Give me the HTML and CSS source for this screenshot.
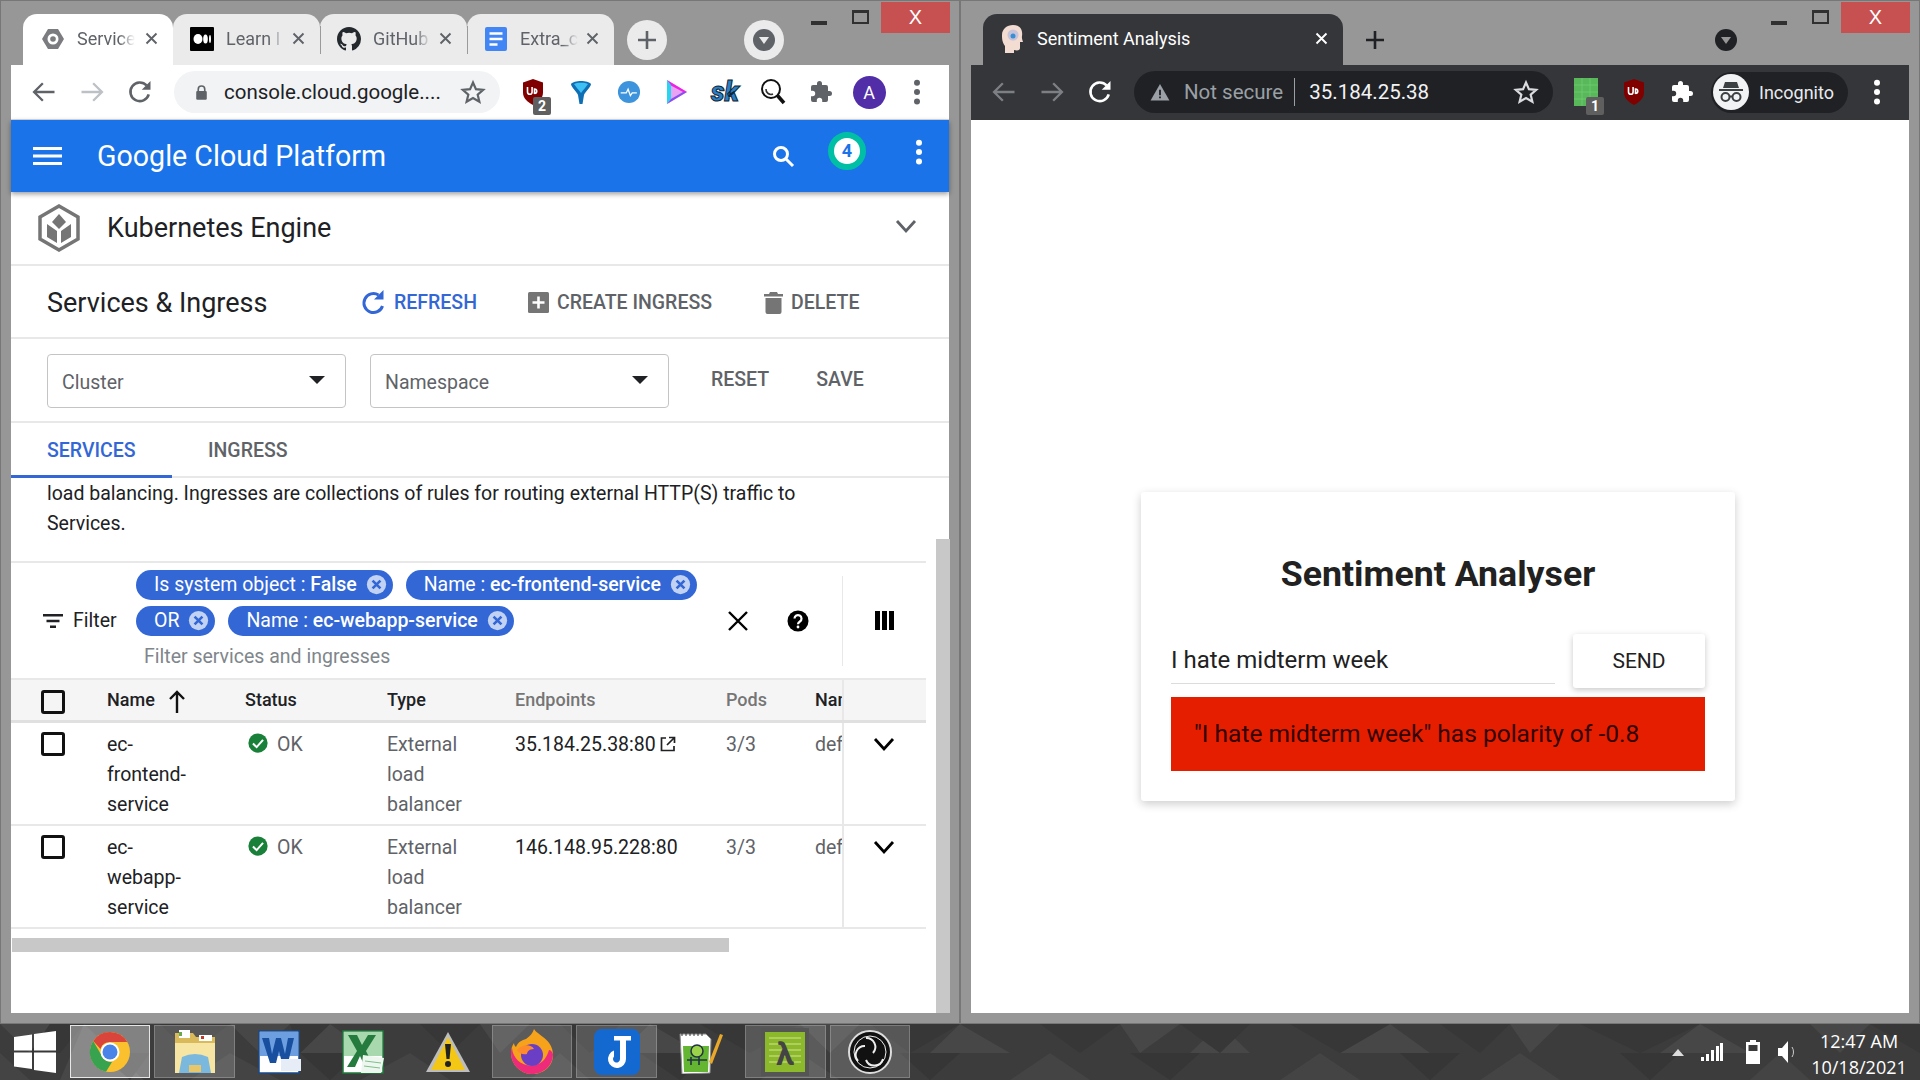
FILE: index.html
```html
<!DOCTYPE html>
<html lang="en">
<head>
  <meta charset="UTF-8" />
  <title>Services &amp; Ingress</title>
  <link rel="stylesheet" href="styles.css">
</head>
<body>

  <!-- shared icons -->
  <svg class="defs" width="0" height="0">
    <symbol id="i-x" viewBox="0 0 24 24"><path d="M4 4l16 16M20 4L4 20" fill="none" stroke="currentColor" stroke-width="3"/></symbol>
    <symbol id="i-back" viewBox="0 0 24 24"><path d="M21 12H4M11 4.500L3.500 12l7.500 7.500" fill="none" stroke="currentColor" stroke-width="2"/></symbol>
    <symbol id="i-fwd" viewBox="0 0 24 24"><path d="M3 12h17M13 4.500l7.500 7.500-7.500 7.500" fill="none" stroke="currentColor" stroke-width="2"/></symbol>
    <symbol id="i-reload" viewBox="0 0 24 24"><path d="M19.500 14a8 8 0 1 1-1.800-7.600" fill="none" stroke="currentColor" stroke-width="2.200"/><path d="M21 2.500v7.500h-7.500z" fill="currentColor"/></symbol>
    <symbol id="i-star" viewBox="0 0 24 24"><path d="M12 3.200l2.700 6.200 6.700.6-5.100 4.400 1.600 6.600L12 17.500l-5.900 3.500 1.600-6.600-5.100-4.400 6.700-.6z" fill="none" stroke="currentColor" stroke-width="2"/></symbol>
    <symbol id="i-puzzle" viewBox="0 0 24 24"><path d="M20.500 11H19V7a2 2 0 0 0-2-2h-4V3.500a2.500 2.500 0 0 0-5 0V5H4a2 2 0 0 0-2 2v3.800h1.500a2.700 2.700 0 0 1 0 5.400H2V20a2 2 0 0 0 2 2h3.800v-1.500a2.700 2.700 0 0 1 5.400 0V22H17a2 2 0 0 0 2-2v-4h1.500a2.500 2.500 0 0 0 0-5z" fill="currentColor"/></symbol>
    <symbol id="i-dots" viewBox="0 0 8 32"><circle cx="4" cy="6" r="3.200" fill="currentColor"/><circle cx="4" cy="16" r="3.200" fill="currentColor"/><circle cx="4" cy="26" r="3.200" fill="currentColor"/></symbol>
    <symbol id="i-shield" viewBox="0 0 24 28"><path d="M12 1l10 3.500v10c0 6-5 10-10 12.500C7 24.500 2 20.500 2 14.500v-10z" fill="#800000"/><path d="M6.500 9v5a2.300 2.300 0 0 0 4.600 0V9M13.500 16v-5a2.200 2.200 0 1 1 0 4.500" fill="none" stroke="#fff" stroke-width="1.600"/></symbol>
    <symbol id="i-check" viewBox="0 0 24 24"><circle cx="12" cy="12" r="10.500" fill="#188038"/><path d="M6.500 12.500l4 4 7-8" fill="none" stroke="#fff" stroke-width="2.200"/></symbol>
    <symbol id="i-chip-x" viewBox="0 0 24 24"><circle cx="12" cy="12" r="11" fill="#c2d2f3"/><path d="M7.500 7.500l9 9M16.500 7.500l-9 9" fill="none" stroke="#3367d6" stroke-width="3"/></symbol>
    <symbol id="i-chevron" viewBox="0 0 24 16"><path d="M3 3l9 10 9-10" fill="none" stroke="currentColor" stroke-width="2.800"/></symbol>
  </svg>

  <div class="desktop">

    <!-- Left window: Cloud console -->
    <div class="window">
      <div class="tabstrip">
        <div class="tab tab-active">
          <svg class="favicon" viewBox="0 0 24 24"><path d="M7 2h10l6 10-6 10H7L1 12z" fill="#7b7c7f"/><circle cx="12" cy="12" r="5.500" fill="#fff"/><circle cx="12" cy="12" r="2.800" fill="#7b7c7f"/></svg>
          <span class="tab-title">Service</span>
          <svg class="tab-x"><use href="#i-x"/></svg>
        </div>
        <div class="tab">
          <svg class="favicon" viewBox="0 0 24 24"><rect width="24" height="24" rx="1" fill="#000"/><ellipse cx="8" cy="12" rx="4.500" ry="5" fill="#fff"/><ellipse cx="15.500" cy="12" rx="2.300" ry="4.600" fill="#fff"/><ellipse cx="20" cy="12" rx="1" ry="4" fill="#fff"/></svg>
          <span class="tab-title">Learn I</span>
          <svg class="tab-x"><use href="#i-x"/></svg>
        </div>
        <div class="tab tab-sep">
          <svg class="favicon" viewBox="0 0 16 16"><path fill="#24292e" d="M8 0C3.580 0 0 3.580 0 8c0 3.540 2.290 6.530 5.470 7.590.4.070.55-.17.55-.38 0-.19-.01-.82-.01-1.490-2.010.37-2.530-.49-2.690-.94-.09-.23-.48-.94-.82-1.130-.28-.15-.68-.52-.01-.53.630-.01 1.080.58 1.230.82.720 1.210 1.870.87 2.330.66.070-.52.280-.87.510-1.070-1.780-.2-3.640-.89-3.640-3.950 0-.87.310-1.590.820-2.150-.08-.2-.36-1.020.08-2.120 0 0 .67-.21 2.200.82a7.420 7.420 0 0 1 4 0c1.530-1.040 2.200-.82 2.200-.82.440 1.100.16 1.920.08 2.120.51.560.82 1.270.82 2.150 0 3.070-1.870 3.750-3.650 3.950.29.250.54.730.54 1.480 0 1.070-.01 1.930-.01 2.200 0 .21.150.46.550.38A8.010 8.010 0 0 0 16 8c0-4.420-3.580-8-8-8z"/></svg>
          <span class="tab-title">GitHub</span>
          <svg class="tab-x"><use href="#i-x"/></svg>
        </div>
        <div class="tab tab-sep">
          <svg class="favicon" viewBox="0 0 24 24"><rect x="1" width="22" height="24" rx="2" fill="#4285f4"/><path d="M5.500 6.500h13M5.500 12h13M5.500 17.500h8" stroke="#fff" stroke-width="2.400"/></svg>
          <span class="tab-title">Extra_c</span>
          <svg class="tab-x"><use href="#i-x"/></svg>
        </div>
        <div class="round-btn new-tab"><svg viewBox="0 0 24 24" width="24" height="24"><path d="M12 3v18M3 12h18" stroke="#5f6368" stroke-width="2.600"/></svg></div>
        <div class="round-btn tab-search"><span class="search-dot"></span></div>
        <div class="win-ctrls">
          <span class="win-min"></span>
          <span class="win-max"></span>
          <span class="win-close">X</span>
        </div>
      </div>

      <div class="toolbar">
        <span class="tool"><svg class="ico-28"><use href="#i-back"/></svg></span>
        <span class="tool tool-dim"><svg class="ico-28"><use href="#i-fwd"/></svg></span>
        <span class="tool"><svg class="ico-28"><use href="#i-reload"/></svg></span>
        <div class="omnibox">
          <svg class="lock" viewBox="0 0 16 20"><path d="M4 9V6a4 4 0 0 1 8 0v3" fill="none" stroke="#5f6368" stroke-width="2"/><rect x="1.500" y="8" width="13" height="11" rx="1.500" fill="#5f6368"/></svg>
          <span class="url">console.cloud.google....</span>
          <svg class="ico-26 star"><use href="#i-star"/></svg>
        </div>
        <span class="tool ext"><svg width="24" height="28"><use href="#i-shield"/></svg><b class="ext-badge">2</b></span>
        <span class="tool"><svg width="22" height="24" viewBox="0 0 22 24"><path d="M1 4c3-4 17-4 20 0 0 3-6 8-7 11l-1.500 9h-3L8 15C7 12 1 7 1 4z" fill="#0f6fb4"/><path d="M4 4c3-1.800 11-1.800 14 0-2 3-4 5-7 9-3-4-5-6-7-9z" fill="#3fc0f5"/></svg></span>
        <span class="tool"><svg width="24" height="24" viewBox="0 0 26 26"><circle cx="13" cy="13" r="12" fill="#3e94dc"/><path d="M4 14h6l2-4 2.500 7 2-3h5" fill="none" stroke="#fff" stroke-width="1.400"/></svg></span>
        <span class="tool"><svg width="24" height="28" viewBox="0 0 24 28"><path d="M2 2l20 12L2 26z" fill="#e6a4f2"/><path d="M2 2l20 12-4 0L5 7z" fill="#ee22e6"/><path d="M2 2v24l4-5V7z" fill="#27d6ee"/><path d="M2 26l20-12-4 0L6 21z" fill="#8a4df0"/></svg></span>
        <span class="tool"><span class="sk-logo">sk</span></span>
        <span class="tool"><svg width="26" height="28" viewBox="0 0 26 28"><circle cx="11" cy="11" r="9" fill="#fff" stroke="#111" stroke-width="2"/><path d="M6 11a5 5 0 0 0 7 5" fill="none" stroke="#333" stroke-width="1.600"/><path d="M17 17l7 8" stroke="#111" stroke-width="3.600"/></svg></span>
        <span class="tool"><svg class="ico-22"><use href="#i-puzzle"/></svg></span>
        <span class="tool"><span class="avatar">A</span></span>
        <span class="tool"><svg class="dots"><use href="#i-dots"/></svg></span>
      </div>

      <div class="content">
        <header class="gcp-bar">
          <svg class="hamburger" viewBox="0 0 29 18"><path d="M0 1.500h29M0 9h29M0 16.500h29" stroke="#fff" stroke-width="3"/></svg>
          <span class="gcp-title">Google Cloud Platform</span>
          <svg class="gcp-search" viewBox="0 0 24 24"><circle cx="10" cy="10" r="6.500" fill="none" stroke="#fff" stroke-width="3"/><path d="M15 15l7 7" stroke="#fff" stroke-width="3"/></svg>
          <span class="gcp-badge">4</span>
          <svg class="gcp-dots"><use href="#i-dots"/></svg>
        </header>

        <div class="product-row">
          <svg class="k8s" viewBox="0 0 44 48"><path d="M22 2l19 11v22L22 46 3 35V13z" fill="none" stroke="#757575" stroke-width="3.500"/><path d="M22 10l7 8-7 7-7-7z" fill="#757575"/><path d="M10 20l10 7v12l-10-6zM34 20l-10 7v12l10-6z" fill="#757575"/></svg>
          <span class="product-name">Kubernetes Engine</span>
          <svg class="product-chevron"><use href="#i-chevron"/></svg>
        </div>

        <div class="title-row">
          <h2>Services &amp; Ingress</h2>
          <span class="action action-blue action-refresh"><svg width="25" height="27" viewBox="0 0 25 27"><path d="M21.500 17a9.500 9.500 0 1 1-4-11" fill="none" stroke="#3367d6" stroke-width="3"/><path d="M22.500 1v9.500H13z" fill="#3367d6"/></svg>REFRESH</span>
          <span class="action action-create"><svg width="21" height="21" viewBox="0 0 21 21"><rect width="21" height="21" rx="1.500" fill="#757575"/><path d="M10.500 4.500v12M4.500 10.500h12" stroke="#fff" stroke-width="2.600"/></svg>CREATE INGRESS</span>
          <span class="action action-delete"><svg width="19" height="22" viewBox="0 0 19 22"><path d="M6 0h7l1 2h5v2.500H0V2h5zM1.500 6h16v14a2 2 0 0 1-2 2h-12a2 2 0 0 1-2-2z" fill="#757575"/></svg>DELETE</span>
        </div>

        <div class="select-row">
          <div class="select select-first"><span>Cluster</span><i class="caret"></i></div>
          <div class="select"><span>Namespace</span><i class="caret"></i></div>
          <span class="plain-btn plain-reset">RESET</span>
          <span class="plain-btn plain-save">SAVE</span>
        </div>

        <div class="tabs">
          <span class="tab-link tab-link-on">SERVICES</span>
          <span class="tab-link">INGRESS</span>
        </div>

        <div class="scroller">
          <div class="scroll-body">
            <p class="intro">load balancing. Ingresses are collections of rules for routing external HTTP(S) traffic to Services.</p>

            <div class="filter-box">
              <div class="filter-label">
                <svg width="20" height="14" viewBox="0 0 20 14"><path d="M0 1.200h20M3.500 7h13M7 12.800h6" stroke="#202124" stroke-width="2.400"/></svg>
                <span>Filter</span>
              </div>
              <div class="filter-main">
                <div class="chips">
                  <span class="chip">Is system object : <b>False</b><svg><use href="#i-chip-x"/></svg></span>
                  <span class="chip">Name : <b>ec-frontend-service</b><svg><use href="#i-chip-x"/></svg></span>
                </div>
                <div class="chips">
                  <span class="chip">OR<svg><use href="#i-chip-x"/></svg></span>
                  <span class="chip">Name : <b>ec-webapp-service</b><svg><use href="#i-chip-x"/></svg></span>
                </div>
                <div class="filter-hint">Filter services and ingresses</div>
              </div>
              <svg class="filter-clear" viewBox="0 0 20 20"><path d="M1 1l18 18M19 1L1 19" stroke="#000" stroke-width="2.400"/></svg>
              <svg class="filter-help" viewBox="0 0 22 22"><circle cx="11" cy="11" r="10.500" fill="#000"/><path d="M7.500 8.500a3.500 3.500 0 1 1 5.400 3c-1.300.9-1.900 1.400-1.900 2.800" fill="none" stroke="#fff" stroke-width="2.200"/><circle cx="11" cy="17" r="1.400" fill="#fff"/></svg>
              <div class="filter-cols">
                <svg width="19" height="19" viewBox="0 0 19 19"><path d="M0 0h5v19H0zM7 0h5v19H7zM14 0h5v19h-5z" fill="#000"/></svg>
              </div>
            </div>

            <div class="row row-head">
              <span class="cell cell-check"><i class="checkbox"></i></span>
              <span class="cell cell-name">Name <svg width="18" height="23" viewBox="0 0 18 23"><path d="M9 23V2M2 9l7-7 7 7" fill="none" stroke="#111" stroke-width="2.400"/></svg></span>
              <span class="cell">Status</span>
              <span class="cell">Type</span>
              <span class="cell cell-muted">Endpoints</span>
              <span class="cell cell-muted">Pods</span>
              <span class="cell cell-clip">Namespace</span>
              <span class="cell cell-end"></span>
            </div>

            <div class="row">
              <span class="cell cell-check"><i class="checkbox"></i></span>
              <span class="cell cell-dark">ec-<br>frontend-<br>service</span>
              <span class="cell cell-status"><svg width="22" height="22"><use href="#i-check"/></svg>OK</span>
              <span class="cell cell-muted">External<br>load<br>balancer</span>
              <span class="cell cell-dark">35.184.25.38:80<svg class="ext-link" width="16" height="16" viewBox="0 0 16 16"><path d="M6 2H1.500v12.500H14V10M9 1.500h5.500V7M14 2L7 9" fill="none" stroke="#202124" stroke-width="1.700"/></svg></span>
              <span class="cell cell-muted">3/3</span>
              <span class="cell cell-muted cell-clip">default</span>
              <span class="cell cell-end"><svg class="row-chevron"><use href="#i-chevron"/></svg></span>
            </div>

            <div class="row">
              <span class="cell cell-check"><i class="checkbox"></i></span>
              <span class="cell cell-dark">ec-<br>webapp-<br>service</span>
              <span class="cell cell-status"><svg width="22" height="22"><use href="#i-check"/></svg>OK</span>
              <span class="cell cell-muted">External<br>load<br>balancer</span>
              <span class="cell cell-dark">146.148.95.228:80</span>
              <span class="cell cell-muted">3/3</span>
              <span class="cell cell-muted cell-clip">default</span>
              <span class="cell cell-end"><svg class="row-chevron"><use href="#i-chevron"/></svg></span>
            </div>

            <div class="hscroll"><div class="hscroll-thumb"></div></div>
          </div>
          <div class="vscroll"><div class="vscroll-thumb"></div></div>
        </div>
      </div>
    </div>

    <!-- Right window: incognito -->
    <div class="window window-dark">
      <div class="tabstrip">
        <div class="tab tab-active tab-wide">
          <svg class="favicon favicon-tall" viewBox="0 0 24 30"><path d="M12 1c7 0 10 5 9 11-.5 3 1 5 1 6h-3v6c0 2-2 3-6 2v3H4v-7C1 18 1 14 1 11 1 5 6 1 12 1z" fill="#f3dcd2"/><circle cx="12" cy="11" r="5.500" fill="#c6c3da"/><circle cx="12" cy="12" r="2.500" fill="#3a8fd0"/></svg>
          <span class="tab-title tab-title-full">Sentiment Analysis</span>
          <svg class="tab-x"><use href="#i-x"/></svg>
        </div>
        <div class="round-btn new-tab new-tab-dark"><svg viewBox="0 0 24 24" width="24" height="24"><path d="M12 3v18M3 12h18" stroke="#202124" stroke-width="2.600"/></svg></div>
        <div class="round-btn tab-search tab-search-dark"><span class="search-dot"></span></div>
        <div class="win-ctrls">
          <span class="win-min"></span>
          <span class="win-max"></span>
          <span class="win-close">X</span>
        </div>
      </div>

      <div class="toolbar">
        <span class="tool tool-dim"><svg class="ico-28"><use href="#i-back"/></svg></span>
        <span class="tool tool-dim"><svg class="ico-28"><use href="#i-fwd"/></svg></span>
        <span class="tool"><svg class="ico-28"><use href="#i-reload"/></svg></span>
        <div class="omnibox">
          <svg class="warn" viewBox="0 0 22 20"><path d="M11 1l10.500 18.500h-21z" fill="#9aa0a6"/><path d="M11 7.500v6M11 15v2" stroke="#202124" stroke-width="2"/></svg>
          <span class="not-secure">Not secure</span>
          <span class="url url-ip">35.184.25.38</span>
          <svg class="ico-26 star"><use href="#i-star"/></svg>
        </div>
        <span class="tool ext ext-green"><svg width="24" height="28" viewBox="0 0 24 28"><rect width="24" height="28" fill="#58b85a"/><path d="M0 7h24M0 14h24M0 21h24M8 0v28M16 0v28" stroke="#6cc86e" stroke-width="1"/></svg><b class="ext-badge">1</b></span>
        <span class="tool"><svg width="24" height="28"><use href="#i-shield"/></svg></span>
        <span class="tool"><svg class="ico-22"><use href="#i-puzzle"/></svg></span>
        <div class="incognito">
          <span class="incognito-face"><svg width="26" height="22" viewBox="0 0 26 22"><path d="M7 1h12l2 6H5zM1 8h24v2H1z" fill="#3c4043"/><circle cx="7.500" cy="16" r="4" fill="none" stroke="#3c4043" stroke-width="2"/><circle cx="18.500" cy="16" r="4" fill="none" stroke="#3c4043" stroke-width="2"/><path d="M11.500 15.500h3" stroke="#3c4043" stroke-width="2"/></svg></span>
          <span>Incognito</span>
        </div>
        <span class="tool"><svg class="dots"><use href="#i-dots"/></svg></span>
      </div>

      <div class="content content-page">
        <div class="card">
          <h1>Sentiment Analyser</h1>
          <div class="send-row">
            <div class="text-input">I hate midterm week</div>
            <button class="send">SEND</button>
          </div>
          <div class="result">"I hate midterm week" has polarity of -0.8</div>
        </div>
      </div>
    </div>
  </div>

  <!-- Taskbar -->
  <footer class="taskbar">
    <svg class="task-bg" viewBox="0 0 1920 56" preserveAspectRatio="none">
      <path d="M0 0h50L30 29zM84 0l60 56H60zM230 0h60l-30 29zM330 0l40 29h-70zM480 0h50l-30 29zM620 29l30-29 50 29zM800 0h60l-30 29zM960 0l-30 29h80zM1120 0h60l-40 29zM1250 29l-30-29-30 29zM1390 0l40 29h-90zM1510 0h50l-30 29zM1700 0l50 29h-90zM1810 0h60l-30 29z" fill="#474747"/>
      <path d="M50 0h34L60 29H30zM160 0h70l-40 29zM290 0h40l-30 29zM420 0h60l-30 29zM560 0h60l-30 29zM700 0h100l-50 29zM870 0h90l-50 29zM1040 0h80l-40 29zM1180 0h70l-30 29zM1290 0h100l-50 29zM1440 0h70l-30 29zM1580 0h120l-60 29zM1870 0h50v29z" fill="#373737"/>
      <path d="M0 29l30 27H0zM190 56l40-27 50 27zM360 56l50-27 40 27zM530 56l30-27 30 27zM760 56l40-27 40 27zM1010 56l40-27 40 27zM1280 56l40-27 40 27zM1480 56l40-27 40 27zM1750 56l30-27 30 27z" fill="#444"/>
      <path d="M100 29h50l-20 27zM300 29h60l-30 27zM640 29h70l-30 27zM900 29h60l-30 27zM1130 29h70l-30 27zM1400 29h60l-30 27zM1620 29h60l-30 27z" fill="#363636"/>
    </svg>
    <svg class="start" width="42" height="42" viewBox="0 0 42 42"><path d="M0 6l18-2.500v16H0zM20 3l22-3v19.500H20zM0 21.500h18V38L0 35.500zM20 21.500h22V42l-22-3z" fill="#fff"/></svg>
    <div class="task task-on"><svg width="42" height="42" viewBox="0 0 42 42"><circle cx="21" cy="21" r="20" fill="#fbc02d"/><path d="M21 1a20 20 0 0 1 17.300 10H21a10 10 0 0 0-9.500 7L4.200 10A20 20 0 0 1 21 1z" fill="#d9453a"/><path d="M4.200 10l9 15.600A10 10 0 0 0 23 31l-6 9.800A20 20 0 0 1 4.200 10z" fill="#37a34f"/><circle cx="21" cy="21" r="9.500" fill="#fff"/><circle cx="21" cy="21" r="7.500" fill="#4a84e8"/></svg></div>
    <div class="task task-open"><svg width="46" height="46" viewBox="0 0 46 46"><path d="M3 4h18l3 4h19v36H3z" fill="#d9b95a"/><path d="M7 1h11v8H7zM27 6h13v6H27z" fill="#fff"/><path d="M7 3h3v4H7z" fill="#6aa84f"/><path d="M29 7h3v3h-3z" fill="#c0392b"/><path d="M3 14h40v30H3z" fill="#f6e5a3"/><path d="M10 28q13-6 26 0l3 16H7z" fill="#7ab8de"/><path d="M17 36h12v7H17z" fill="#e7c76a"/></svg></div>
    <div class="task"><svg width="44" height="46" viewBox="0 0 44 46"><path d="M2 2h40v42H2z" fill="#fff" stroke="#174a8c" stroke-width="1.500"/><path d="M3 3h38v24H3z" fill="#6d9fe0"/><path d="M5 9h7l3 16 4-16h5l4 16 3-16h6l-6 25h-6l-3-12-3 12h-6z" fill="#184f9e"/><path d="M24 30h20v12H24z" fill="#e6edf7"/></svg></div>
    <div class="task"><svg width="44" height="46" viewBox="0 0 44 46"><path d="M2 2h40v42H2z" fill="#fff" stroke="#1f7a3d" stroke-width="1.500"/><path d="M3 3h38v24H3z" fill="#a8d8ae"/><path d="M7 6h9l5 10 6-10h8L25 22l8 16h-9l-5-11-5 11H6l10-16z" fill="#257a3e"/><path d="M22 26l21 3-3 15H20z" fill="#eef7ef"/><path d="M24 32l16 2M23 37l16 2" stroke="#7fbf8b"/></svg></div>
    <div class="task"><svg width="46" height="46" viewBox="0 0 46 46"><path d="M23 3L45 43H1z" fill="#bdbdbd"/><path d="M23 8L40 41H6z" fill="#f3c713"/><path d="M20 15h6l-1.500 15h-3z" fill="#222"/><circle cx="23" cy="35" r="3" fill="#222"/></svg></div>
    <div class="task task-open"><svg width="46" height="48" viewBox="0 0 46 48"><path d="M23 46A21 21 0 0 1 2 25c0-4 1-7 3-10 0 2 1 3 2 4 2-5 6-7 10-8 4-3 7-6 8-10 3 6 19 10 19 26 0 11-9 19-21 19z" fill="#f7a21b"/><path d="M23 46A21 21 0 0 1 2 25c0-2 0-3 1-5 1 12 12 20 24 17 7-2 11-8 13-15 2 0 3 2 4 4 0 11-9 20-21 20z" fill="#ee2a7b"/><circle cx="23" cy="27" r="11" fill="#6a3fc6"/><path d="M8 22c5-6 14-6 17-1-5 0-7 3-7 5-5 1-8-1-10-4z" fill="#ff8b2c"/></svg></div>
    <div class="task task-open"><svg width="46" height="46" viewBox="0 0 46 46"><rect x="0" y="0" width="46" height="46" rx="8" fill="#1369d0"/><path d="M20 7h17v4.500h-5V30a9 9 0 1 1-12-8.500v6a3.500 3.500 0 1 0 6 2.500V11.500h-6z" fill="#fff"/></svg></div>
    <div class="task"><svg width="44" height="44" viewBox="0 0 44 44"><path d="M1 4h26l5 5-1 34-28 1z" fill="#fff" stroke="#888"/><path d="M3 3v3M7 3v3M11 3v3M15 3v3M19 3v3M23 3v3" stroke="#333"/><path d="M4 16h26l-1 26H5z" fill="#63b532"/><circle cx="18" cy="21" r="6" fill="#9bd44a" stroke="#234" stroke-width="1.500"/><path d="M8 30h20M12 27v8M20 27v8" stroke="#234" stroke-width="1.600"/><path d="M30 32L41 4l3 1-11 29z" fill="#e9a829"/></svg></div>
    <div class="task task-open"><svg width="48" height="48" viewBox="0 0 48 48"><rect width="48" height="48" fill="#555"/><rect x="4" y="4" width="40" height="40" fill="#8cb82b"/><path d="M8 10h32M8 16h32M8 22h32M8 28h32M8 34h32" stroke="#b9d56f" stroke-width="1.500"/><text x="24" y="37" text-anchor="middle" class="lambda">λ</text></svg></div>
    <div class="task task-open"><svg width="44" height="44" viewBox="0 0 44 44"><circle cx="22" cy="22" r="21" fill="#111" stroke="#ddd" stroke-width="2"/><circle cx="22" cy="22" r="16" fill="none" stroke="#eee" stroke-width="1"/><path d="M18 8a9 9 0 0 1 7 15 9 9 0 0 0-7-15zM10 31a9 9 0 0 1 7-15 9 9 0 0 0-7 15zM35 29a9 9 0 0 1-17 1 9 9 0 0 0 17-1z" fill="#eee" stroke="#eee" stroke-width="2"/></svg></div>

    <div class="tray">
      <i class="tray-up"></i>
      <svg class="tray-signal" width="22" height="18" viewBox="0 0 22 18"><path d="M0 14h3v4H0zM5 11h3v7H5zM10 7h3v11h-3zM15 3h3v15h-3zM19 0h3v18h-3z" fill="#fff"/></svg>
      <svg class="tray-battery" width="14" height="24" viewBox="0 0 14 24"><path d="M4 0h6v2h4v22H0V2h4z" fill="#fff"/><rect x="2.500" y="5" width="9" height="6" fill="#3c3c3c"/></svg>
      <svg class="tray-sound" width="20" height="24" viewBox="0 0 20 24"><path d="M0 8h4l6-7v22l-6-7H0z" fill="#fff"/><path d="M14 7c2 3 2 7 0 10" fill="none" stroke="#ccc" stroke-width="1"/></svg>
      <div class="clock"><span>12:47 AM</span><span>10/18/2021</span></div>
    </div>
  </footer>

</body>
</html>
```

FILE: styles.css
```css
* {
  margin: 0;
  padding: 0;
  box-sizing: border-box;
}

html, body {
  width: 1920px;
  height: 1080px;
  overflow: hidden;
}

body {
  font-family: Roboto, sans-serif;
  color: #202124;
  background: #3c3c3c;
}

.defs {
  position: absolute;
}

.desktop {
  display: flex;
  height: 1024px;
}

/* Browser frame */
.window {
  width: 960px;
  height: 1024px;
  background: #979797;
  border: 1px solid #777;
  padding: 0 10px 10px;
  display: flex;
  flex-direction: column;
}

.tabstrip {
  height: 64px;
  display: flex;
  align-items: flex-end;
  position: relative;
  padding-left: 12px;
  flex: none;
}

.tab {
  width: 147px;
  height: 51px;
  background: #ebebec;
  border-radius: 14px 14px 0 0;
  display: flex;
  align-items: center;
  padding: 0 14px 2px 17px;
  position: relative;
  font-size: 18px;
  color: #5f6368;
}

.tab-active {
  width: 150px;
  background: #fff;
  padding-left: 18px;
}

.tab-sep::before {
  content: "";
  position: absolute;
  left: 0;
  top: 12px;
  height: 28px;
  width: 1px;
  background: #9a9a9a;
}

.favicon {
  width: 24px;
  height: 24px;
  flex: none;
}

.favicon-tall {
  height: 30px;
}

.tab-title {
  margin-left: 12px;
  width: 58px;
  white-space: nowrap;
  overflow: hidden;
  mask-image: linear-gradient(to right, #000 72%, transparent);
  flex: none;
}

.tab-x {
  width: 15px;
  height: 15px;
  margin-left: auto;
  color: #5f6368;
  flex: none;
}

.round-btn {
  width: 40px;
  height: 40px;
  border-radius: 50%;
  background: #ebebec;
  display: flex;
  align-items: center;
  justify-content: center;
  flex: none;
  align-self: flex-end;
  margin-bottom: 5px;
}

.new-tab {
  margin-left: 13px;
}

.tab-search {
  margin-left: 77px;
}

.search-dot {
  width: 22px;
  height: 22px;
  border-radius: 50%;
  background: #5f6368;
  position: relative;
}

.search-dot::after {
  content: "";
  position: absolute;
  left: 6px;
  top: 8px;
  border-left: 5px solid transparent;
  border-right: 5px solid transparent;
  border-top: 7px solid #ebebec;
}

.win-ctrls {
  position: absolute;
  top: 1px;
  right: -1px;
  height: 30px;
  display: flex;
  align-items: flex-start;
}

.win-min {
  width: 16px;
  height: 4px;
  background: #303030;
  margin: 19px 25px 0 0;
}

.win-max {
  width: 17px;
  height: 14px;
  border: 2px solid #303030;
  border-top-width: 3px;
  margin: 8px 12px 0 0;
}

.win-close {
  width: 69px;
  height: 31px;
  background: #c75050;
  color: #fff;
  font: 20px/31px "Liberation Sans", sans-serif;
  text-align: center;
}

/* Toolbar */
.toolbar {
  height: 55px;
  background: #fff;
  border-bottom: 1px solid #dadce0;
  display: flex;
  align-items: center;
  padding-left: 9px;
  flex: none;
  color: #5f6368;
}

.tool {
  width: 48px;
  height: 42px;
  display: flex;
  align-items: center;
  justify-content: center;
  position: relative;
  flex: none;
}

.tool-dim {
  color: #bdc1c6;
}

.ico-28 {
  width: 28px;
  height: 28px;
}

.ico-26 {
  width: 26px;
  height: 26px;
}

.ico-22 {
  width: 24px;
  height: 24px;
}

.dots {
  width: 8px;
  height: 30px;
}

.omnibox {
  width: 326px;
  height: 42px;
  margin: 0 9px 0 10px;
  border-radius: 21px;
  background: #f1f3f4;
  display: flex;
  align-items: center;
  padding: 0 14px 0 21px;
  flex: none;
}

.lock {
  width: 13px;
  height: 17px;
  flex: none;
}

.url {
  margin-left: 16px;
  font-size: 20.500px;
  color: #202124;
  white-space: nowrap;
}

.star {
  margin-left: auto;
  flex: none;
}

.ext-badge {
  position: absolute;
  left: 24px;
  bottom: -2px;
  width: 18px;
  height: 18px;
  background: #5f5f5f;
  border-radius: 2px;
  color: #fff;
  font-size: 14px;
  line-height: 18px;
  text-align: center;
}

.sk-logo {
  font-size: 27px;
  line-height: 28px;
  font-weight: 900;
  font-style: italic;
  color: #2a7fc6;
  -webkit-text-stroke: 1px #10222f;
}

.avatar {
  width: 33px;
  height: 33px;
  border-radius: 50%;
  background: #512da8;
  color: #fff;
  font-size: 18px;
  line-height: 33px;
  text-align: center;
}

/* Cloud console */
.content {
  flex: 1;
  background: #fff;
  display: flex;
  flex-direction: column;
  min-height: 0;
}

.gcp-bar {
  height: 72px;
  background: #1a73e8;
  box-shadow: 0 2px 5px rgba(0, 0, 0, 0.4);
  display: flex;
  align-items: center;
  position: relative;
  flex: none;
  color: #fff;
}

.hamburger {
  width: 29px;
  height: 18px;
  margin-left: 22px;
}

.gcp-title {
  width: 290px;
  margin-left: 35px;
  font-size: 28.600px;
  white-space: nowrap;
}

.gcp-search {
  width: 24px;
  height: 24px;
  margin-left: 384px;
}

.gcp-badge {
  width: 38px;
  height: 38px;
  border-radius: 50%;
  background: #fff;
  border: 6px solid #00bfa5;
  color: #1a73e8;
  font-size: 18px;
  font-weight: 700;
  line-height: 26px;
  text-align: center;
  margin: -10px 0 0 33px;
}

.gcp-dots {
  width: 8px;
  height: 30px;
  margin: -8px 0 0 49px;
}

.product-row {
  height: 74px;
  border-bottom: 2px solid #e8e8e8;
  display: flex;
  align-items: center;
  flex: none;
}

.k8s {
  width: 44px;
  height: 48px;
  margin-left: 26px;
}

.product-name {
  margin-left: 26px;
  font-size: 27px;
  color: #202124;
}

.product-chevron {
  width: 24px;
  height: 16px;
  margin: -4px 31px 0 auto;
  color: #5f6368;
}

.title-row {
  height: 73px;
  border-bottom: 2px solid #e8e8e8;
  display: flex;
  align-items: center;
  padding: 2px 0 0 36px;
  flex: none;
}

.title-row h2 {
  width: 314px;
  font-size: 27px;
  font-weight: 400;
  white-space: nowrap;
}

.action {
  display: flex;
  align-items: center;
  gap: 8px;
  font-size: 19.500px;
  font-weight: 500;
  color: #5f6368;
  white-space: nowrap;
}

.action-blue {
  color: #3367d6;
}

.action-create {
  margin-left: 51px;
}

.action-delete {
  margin-left: 52px;
}

.select-row {
  height: 84px;
  border-bottom: 2px solid #e8e8e8;
  display: flex;
  align-items: center;
  padding: 2px 0 0 36px;
  gap: 24px;
  flex: none;
}

.select {
  width: 299px;
  height: 54px;
  border: 1px solid #c4c4c4;
  border-radius: 4px;
  display: flex;
  align-items: center;
  justify-content: space-between;
  padding: 2px 20px 0 14px;
  font-size: 19.500px;
  color: #5f6368;
}

.caret {
  border-left: 8px solid transparent;
  border-right: 8px solid transparent;
  border-top: 8px solid #202124;
  margin-top: -4px;
}

.plain-btn {
  font-size: 19.500px;
  font-weight: 500;
  color: #5f6368;
  margin-top: -4px;
}

.plain-reset {
  margin-left: 18px;
}

.plain-save {
  margin-left: 23px;
}

.tabs {
  height: 55px;
  border-bottom: 2px solid #e8e8e8;
  display: flex;
  flex: none;
}

.tab-link {
  padding: 0 36px;
  font-size: 19.500px;
  font-weight: 500;
  line-height: 55px;
  color: #5f6368;
}

.tab-link-on {
  color: #3367d6;
  border-bottom: 3px solid #3367d6;
  height: 55px;
  width: 161px;
}

.scroller {
  flex: 1;
  display: flex;
  min-height: 0;
}

.scroll-body {
  width: 925px;
  padding-right: 10px;
  flex: none;
}

.intro {
  height: 85px;
  padding: 1px 120px 0 36px;
  border-bottom: 2px solid #e8e8e8;
  font-size: 19.500px;
  line-height: 30px;
}

.filter-box {
  height: 115px;
  display: flex;
  align-items: center;
  position: relative;
}

.filter-label {
  width: 125px;
  padding-left: 32px;
  display: flex;
  align-items: center;
  gap: 10px;
  font-size: 19.500px;
  flex: none;
}

.filter-main {
  width: 565px;
  flex: none;
}

.chips {
  display: flex;
  gap: 13px;
  margin-bottom: 6px;
}

.chip {
  height: 30px;
  border-radius: 15px;
  background: #3367d6;
  color: #fff;
  font-size: 19.500px;
  line-height: 30px;
  padding: 0 6px 0 18px;
  display: flex;
  align-items: center;
  white-space: pre;
}

.chip b {
  font-weight: 500;
}

.chip svg {
  width: 21px;
  height: 21px;
  margin-left: 9px;
}

.filter-hint {
  padding-left: 8px;
  font-size: 19.500px;
  line-height: 30px;
  color: #80868b;
}

.filter-clear {
  width: 20px;
  height: 20px;
  margin-left: 27px;
  flex: none;
}

.filter-help {
  width: 22px;
  height: 22px;
  margin-left: 39px;
  flex: none;
}

.filter-cols {
  width: 84px;
  height: 90px;
  margin-left: 33px;
  border-left: 1px solid #e8e8e8;
  display: flex;
  align-items: center;
  justify-content: center;
  flex: none;
}

/* Services table */
.row {
  display: grid;
  grid-template-columns: 96px 138px 142px 128px 211px 89px 27px 84px;
  height: 103px;
  border-bottom: 2px solid #e8e8e8;
  font-size: 19.500px;
  line-height: 30px;
}

.row-head {
  height: 45px;
  border-top: 2px solid #e8e8e8;
  border-bottom: 3px solid #e0e0e0;
  background: #f5f5f5;
  font-size: 18px;
  font-weight: 500;
}

.cell {
  padding-top: 7px;
  white-space: nowrap;
}

.row-head .cell {
  padding-top: 5px;
}

.cell-check {
  padding-left: 30px;
  padding-top: 9px;
}

.row-head .cell-check {
  padding-top: 10px;
}

.checkbox {
  display: block;
  width: 24px;
  height: 24px;
  border: 3px solid #111;
  border-radius: 3px;
}

.cell-name {
  display: flex;
  align-items: flex-start;
  gap: 13px;
}

.cell-name svg {
  margin-top: 5px;
}

.cell-dark {
  color: #202124;
}

.cell-muted,
.cell-status {
  color: #5f6368;
}

.row-head .cell-muted {
  color: #757575;
}

.cell-clip {
  overflow: hidden;
}

.cell-status {
  display: flex;
  align-items: flex-start;
  gap: 8px;
}

.cell-status svg {
  margin: 2px 0 0 2px;
}

.cell-end {
  border-left: 2px solid #e8e8e8;
  padding: 13px 0 0 28px;
}

.row-head .cell-end {
  padding: 0;
}

.row-chevron {
  display: block;
  width: 24px;
  height: 16px;
  color: #000;
}

.ext-link {
  margin-left: 4px;
  vertical-align: -1px;
}

.hscroll {
  margin-top: 9px;
}

.hscroll-thumb {
  width: 717px;
  height: 14px;
  margin-left: 1px;
  background: #c8c8c8;
}

.vscroll {
  width: 14px;
  padding-top: 61px;
  flex: none;
}

.vscroll-thumb {
  height: 100%;
  background: #c8c8c8;
}

/* Dark window */
.window-dark .tab-active {
  background: #35363a;
  color: #fff;
}

.tab-wide {
  width: 360px;
}

.tab-title-full {
  width: auto;
  mask-image: none;
}

.window-dark .tab-x {
  color: #fff;
}

.new-tab-dark,
.tab-search-dark {
  background: none;
}

.new-tab-dark {
  margin-left: 12px;
}

.tab-search-dark {
  margin-left: 311px;
}

.tab-search-dark .search-dot {
  background: #202124;
}

.tab-search-dark .search-dot::after {
  border-top-color: #979797;
}

.window-dark .toolbar {
  background: #35363a;
  border-bottom-color: #35363a;
  color: #fff;
}

.window-dark .tool-dim {
  color: #7c7f84;
}

.window-dark .omnibox {
  width: 419px;
  background: #202124;
  padding-left: 16px;
}

.window-dark .star {
  color: #dadce0;
}

.warn {
  width: 20px;
  height: 18px;
  flex: none;
}

.not-secure {
  margin-left: 14px;
  padding-right: 11px;
  border-right: 1px solid #9aa0a6;
  font-size: 20.500px;
  line-height: 28px;
  color: #9aa0a6;
  white-space: nowrap;
}

.url-ip {
  margin-left: 14px;
  color: #f1f3f4;
}

.incognito {
  width: 137px;
  height: 41px;
  margin-left: 5px;
  border-radius: 21px;
  background: #202124;
  display: flex;
  align-items: center;
  gap: 10px;
  padding-left: 2px;
  font-size: 18px;
  color: #e8eaed;
  flex: none;
}

.incognito-face {
  width: 36px;
  height: 36px;
  border-radius: 50%;
  background: #f1f3f4;
  display: flex;
  align-items: center;
  justify-content: center;
}

.window-dark .incognito + .tool {
  margin-left: 5px;
}

/* Sentiment page */
.content-page {
  padding: 372px 0 0 170px;
}

.card {
  width: 594px;
  height: 309px;
  border-radius: 3px;
  background: #fff;
  box-shadow: 0 3px 10px rgba(0, 0, 0, 0.2);
  padding: 0 30px;
}

.card h1 {
  padding-top: 59px;
  font-size: 35.700px;
  line-height: 46px;
  font-weight: 700;
  text-align: center;
  color: #212121;
}

.send-row {
  display: flex;
  gap: 18px;
  margin-top: 37px;
}

.text-input {
  width: 384px;
  height: 50px;
  border-bottom: 1px solid #dcdcdc;
  font-size: 24px;
  line-height: 52px;
  color: #212121;
}

.send {
  width: 132px;
  height: 54px;
  border: 0;
  border-radius: 3px;
  background: #fff;
  box-shadow: 0 2px 6px rgba(0, 0, 0, 0.22);
  font: 400 21px Roboto, sans-serif;
  color: #212121;
}

.result {
  margin-top: 9px;
  height: 74px;
  background: #e61e00;
  padding-left: 23px;
  font-size: 24.500px;
  line-height: 74px;
  color: #300;
}

/* Taskbar */
.taskbar {
  height: 56px;
  display: flex;
  align-items: center;
  padding-left: 14px;
  position: relative;
  background: #3c3c3c;
}

.task-bg {
  position: absolute;
  inset: 0;
  width: 100%;
  height: 100%;
}

.start {
  position: relative;
  width: 42px;
  margin-right: 12px;
  flex: none;
}

.task {
  position: relative;
  width: 84.400px;
  height: 56px;
  padding: 0 4px;
  display: flex;
  align-items: center;
  justify-content: center;
  flex: none;
}

.task-open::before,
.task-on::before {
  content: "";
  position: absolute;
  inset: 1px 2px 2px;
  background: rgba(255, 255, 255, 0.16);
  border: 1px solid rgba(255, 255, 255, 0.22);
}

.task-on::before {
  background: rgba(255, 255, 255, 0.36);
  border-color: rgba(255, 255, 255, 0.8);
}

.task svg {
  position: relative;
}

.lambda {
  font: 700 32px Roboto, sans-serif;
  fill: #444;
}

.tray {
  position: relative;
  margin-left: auto;
  display: flex;
  align-items: center;
}

.tray-up {
  border-left: 6px solid transparent;
  border-right: 6px solid transparent;
  border-bottom: 7px solid #ddd;
}

.tray-signal {
  margin-left: 17px;
}

.tray-battery {
  margin-left: 23px;
}

.tray-sound {
  margin-left: 18px;
}

.clock {
  width: 122px;
  padding-top: 3px;
  display: flex;
  flex-direction: column;
  align-items: center;
  gap: 4px;
  font: 18px/22px "Open Sans", sans-serif;
  color: #fff;
}
```
